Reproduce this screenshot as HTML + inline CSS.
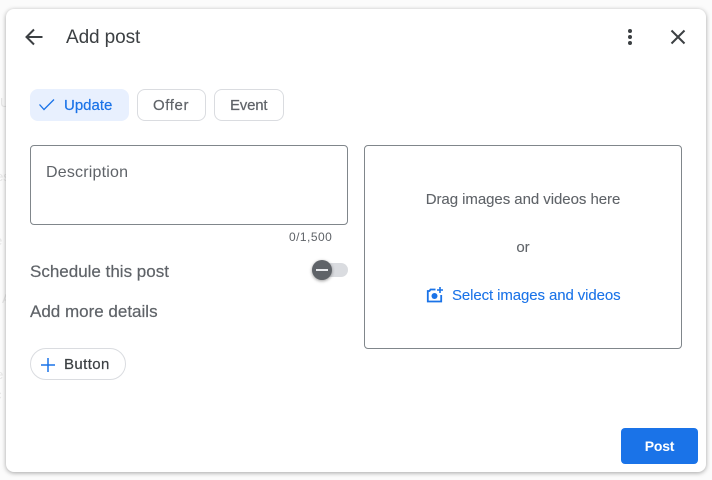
<!DOCTYPE html>
<html>
<head>
<meta charset="utf-8">
<style>
html,body{margin:0;padding:0;width:712px;height:480px;overflow:hidden;background:#fafafa;font-family:"Liberation Sans",sans-serif}
.a{position:absolute;white-space:nowrap}
#bg{left:0;top:0;width:712px;height:480px;background:#fbfbfb}
#dlg{left:6px;top:9px;width:700px;height:463px;background:#fff;border-radius:8px;box-shadow:0 1px 5px rgba(0,0,0,.35)}
.chip{box-sizing:border-box;height:32px;top:89px;border:1px solid #dadce0;border-radius:8px;background:#fff}
.cl{top:97px;color:#5f6368;font-size:15px;line-height:18px;-webkit-text-stroke:.2px currentColor}
.box{box-sizing:border-box;border:1px solid #80868b;border-radius:4px}
.t{color:#5f6368;font-size:17px;line-height:20px;-webkit-text-stroke:.2px #5f6368}
.ghost{color:#e6e6e6;font-size:13px;line-height:14px}
</style>
</head>
<body>
<div class="a" id="bg"></div>
<div class="a ghost" style="left:0;top:96px">U</div>
<div class="a ghost" style="left:-4px;top:170px">es</div>
<div class="a ghost" style="left:-5px;top:234px">e</div>
<div class="a ghost" style="left:2px;top:292px">A</div>
<div class="a ghost" style="left:-4px;top:368px">e</div>
<div class="a ghost" style="left:-5px;top:388px">c</div>
<div class="a" id="dlg"></div>

<svg class="a" style="left:22px;top:25px" width="24" height="24" viewBox="0 0 24 24"><path d="M20.500 12H5M12 4.500 4.500 12l7.500 7.500" fill="none" stroke="#3c4043" stroke-width="2"/></svg>
<div class="a" style="left:66px;top:27px;font-size:19px;line-height:22px;color:#3c4043;letter-spacing:-.1px">Add post</div>
<svg class="a" style="left:618px;top:25px" width="24" height="24" viewBox="0 0 24 24"><circle cx="12" cy="6" r="2" fill="#3c4043"/><circle cx="12" cy="12" r="2" fill="#3c4043"/><circle cx="12" cy="18" r="2" fill="#3c4043"/></svg>
<svg class="a" style="left:666px;top:25px" width="24" height="24" viewBox="0 0 24 24"><path d="M5.500 5.500 18.500 18.500M18.500 5.500 5.500 18.500" fill="none" stroke="#3c4043" stroke-width="2"/></svg>

<div class="a chip" style="left:30px;width:99px;background:#e8f0fe;border-color:#e8f0fe"></div>
<div class="a cl" style="left:64px;color:#1a73e8">Update</div>
<svg class="a" style="left:37px;top:94px" width="20" height="20" viewBox="0 0 20 20"><path d="M2.500 10.500 7 15.500 17 5.500" fill="none" stroke="#1a73e8" stroke-width="1.300"/></svg>
<div class="a chip" style="left:137px;width:69px"></div>
<div class="a cl" style="left:153px;letter-spacing:.6px">Offer</div>
<div class="a chip" style="left:214px;width:70px"></div>
<div class="a cl" style="left:230px;letter-spacing:-.2px">Event</div>

<div class="a box" style="left:30px;top:145px;width:318px;height:80px"></div>
<div class="a" style="left:46px;top:163px;font-size:16px;line-height:20px;color:#5f6368;letter-spacing:.2px">Description</div>
<div class="a" style="left:289px;top:230px;font-size:12px;line-height:14px;color:#5f6368;letter-spacing:.45px">0/1,500</div>

<div class="a t" style="left:30px;top:262px">Schedule this post</div>
<div class="a" style="left:312px;top:263px;width:36px;height:14px;border-radius:7px;background:#dadce0"></div>
<div class="a" style="left:312px;top:260px;width:20px;height:20px;border-radius:50%;background:#5f6368;box-shadow:0 1px 3px rgba(0,0,0,.4)"></div>
<div class="a" style="left:316px;top:269px;width:12px;height:2px;background:#e8eaed"></div>
<div class="a t" style="left:30px;top:302px">Add more details</div>

<div class="a" style="box-sizing:border-box;left:30px;top:348px;width:96px;height:32px;border:1px solid #dadce0;border-radius:16px;background:#fff"></div>
<svg class="a" style="left:38px;top:355px" width="20" height="20" viewBox="0 0 20 20"><path d="M10 3V17M3 10H17" fill="none" stroke="#1a73e8" stroke-width="1.500"/></svg>
<div class="a" style="left:64px;top:356px;font-size:15px;line-height:18px;color:#3c4043;letter-spacing:.4px;-webkit-text-stroke:.2px #3c4043">Button</div>

<div class="a box" style="left:364px;top:145px;width:318px;height:204px"></div>
<div class="a" style="left:364px;width:318px;top:191px;text-align:center;font-size:15px;line-height:18px;color:#5f6368;letter-spacing:-.05px;-webkit-text-stroke:.1px #5f6368">Drag images and videos here</div>
<div class="a" style="left:364px;width:318px;top:239px;text-align:center;font-size:15px;line-height:18px;color:#5f6368;-webkit-text-stroke:.1px #5f6368">or</div>
<svg class="a" style="left:426px;top:286px" width="18" height="18" viewBox="0 0 18 18"><path d="M9.500 3.500H4.500L3.500 5H1.800V15.500H15.200V9" fill="none" stroke="#1a73e8" stroke-width="1.800"/><circle cx="8.500" cy="10" r="3" fill="#1a73e8"/><path d="M14 1V7M11 4H17" fill="none" stroke="#1a73e8" stroke-width="1.600"/></svg>
<div class="a" style="left:452px;top:287px;font-size:15px;line-height:18px;color:#1a73e8;letter-spacing:-.1px;-webkit-text-stroke:.1px #1a73e8">Select images and videos</div>

<div class="a" style="left:621px;top:428px;width:77px;height:36px;border-radius:4px;background:#1a73e8;color:#fff;font-size:14px;font-weight:bold;line-height:36px;text-align:center;letter-spacing:-.2px">Post</div>
</body>
</html>
